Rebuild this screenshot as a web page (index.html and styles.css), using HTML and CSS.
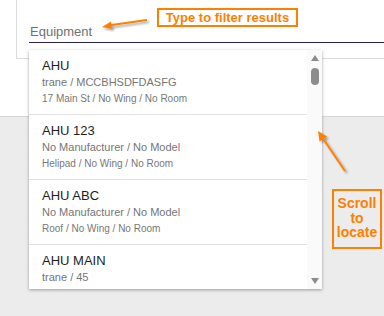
FILE: index.html
```html
<!DOCTYPE html>
<html>
<head>
<meta charset="utf-8">
<link rel="stylesheet" href="styles.css">
</head>
<body>
<div class="top">
  <div class="card">
    <div class="field"><span class="label">Equipment</span></div>
  </div>
</div>

<div class="dropdown">
  <div class="list">
    <div class="item">
      <div class="title">AHU</div>
      <div class="sub">trane / MCCBHSDFDASFG</div>
      <div class="loc">17 Main St / No Wing / No Room</div>
    </div>
    <div class="item">
      <div class="title">AHU 123</div>
      <div class="sub">No Manufacturer / No Model</div>
      <div class="loc">Helipad / No Wing / No Room</div>
    </div>
    <div class="item">
      <div class="title">AHU ABC</div>
      <div class="sub">No Manufacturer / No Model</div>
      <div class="loc">Roof / No Wing / No Room</div>
    </div>
    <div class="item">
      <div class="title">AHU MAIN</div>
      <div class="sub">trane / 45</div>
    </div>
  </div>
  <div class="scrollbar">
    <div class="arrow-up"></div>
    <div class="thumb"></div>
    <div class="spacer"></div>
    <div class="arrow-down"></div>
  </div>
</div>

<div class="note note-filter">Type to filter results</div>
<div class="note note-scroll">Scroll<br>to<br>locate</div>

<svg class="arrows" width="384" height="316" viewBox="0 0 384 316">
  <defs>
    <filter id="sh" x="-20%" y="-20%" width="160%" height="160%">
      <feDropShadow dx="2" dy="2" stdDeviation="1.2" flood-color="#000" flood-opacity="0.35"/>
    </filter>
  </defs>
  <g filter="url(#sh)" fill="#ff7f00" stroke="#ff7f00">
    <line x1="147" y1="20" x2="108" y2="25.5" stroke-width="2"/>
    <polygon points="102,27 111,21.5 112,29" stroke="none"/>
    <line x1="345" y1="171" x2="322" y2="137" stroke-width="2"/>
    <polygon points="318,131 327,136.5 319.5,141.5" stroke="none"/>
  </g>
</svg>
</body>
</html>
```

FILE: styles.css
```css
html, body {
  margin: 0;
  padding: 0;
}
body {
  width: 384px;
  height: 316px;
  overflow: hidden;
  background: #ececec;
  font-family: "Liberation Sans", Arial, sans-serif;
  position: relative;
}
.top {
  background: #fff;
  height: 116px;
  border-bottom: 1px solid #d6d6d6;
  padding-left: 16px;
  box-sizing: content-box;
}
.card {
  box-sizing: border-box;
  height: 59px;
  border-left: 1px solid #dcdcdc;
  border-bottom: 1px solid #dcdcdc;
  padding: 24px 0 0 12px;
}
.field {
  border-bottom: 1px solid #26234f;
  padding-bottom: 3px;
  box-sizing: border-box;
  height: 19px;
}
.label {
  display: block;
  font-size: 13px;
  line-height: 15px;
  color: #707070;
  padding-left: 1px;
}
.dropdown {
  position: absolute;
  left: 29px;
  top: 50px;
  width: 293px;
  height: 239px;
  background: #fff;
  box-shadow: 0 1px 3px rgba(0,0,0,0.35);
  display: flex;
}
.list {
  flex: 1;
  overflow: hidden;
}
.item {
  height: 65px;
  box-sizing: border-box;
  padding: 7px 0 0 13px;
  border-bottom: 1px solid #e2e2e2;
}
.title {
  font-size: 13px;
  line-height: 17px;
  color: #1e1e1e;
}
.sub {
  font-size: 11px;
  line-height: 17px;
  color: #757575;
}
.loc {
  font-size: 10px;
  line-height: 16px;
  color: #777;
}
.scrollbar {
  width: 15px;
  background: #fafafa;
  display: flex;
  flex-direction: column;
  align-items: center;
  padding: 5px 0 5px;
  box-sizing: border-box;
}
.arrow-up {
  width: 0;
  height: 0;
  border-left: 4px solid transparent;
  border-right: 4px solid transparent;
  border-bottom: 6px solid #8c8c8c;
}
.thumb {
  margin-top: 7px;
  width: 8px;
  height: 17px;
  border-radius: 4px;
  background: #8c8c8c;
}
.spacer {
  flex: 1;
}
.arrow-down {
  width: 0;
  height: 0;
  border-left: 4px solid transparent;
  border-right: 4px solid transparent;
  border-top: 6px solid #8c8c8c;
}
.note {
  position: absolute;
  border: 2px solid #ff7f00;
  color: #ff7f00;
  font-weight: bold;
  text-align: center;
  box-sizing: border-box;
}
.note-filter {
  left: 157px;
  top: 8px;
  width: 141px;
  height: 19px;
  font-size: 13px;
  line-height: 15px;
  background: #fff;
}
.note-scroll {
  left: 332px;
  top: 189px;
  width: 50px;
  height: 60px;
  font-size: 14px;
  line-height: 14.5px;
  padding-top: 5px;
}
.arrows {
  position: absolute;
  left: 0;
  top: 0;
  pointer-events: none;
}
```
